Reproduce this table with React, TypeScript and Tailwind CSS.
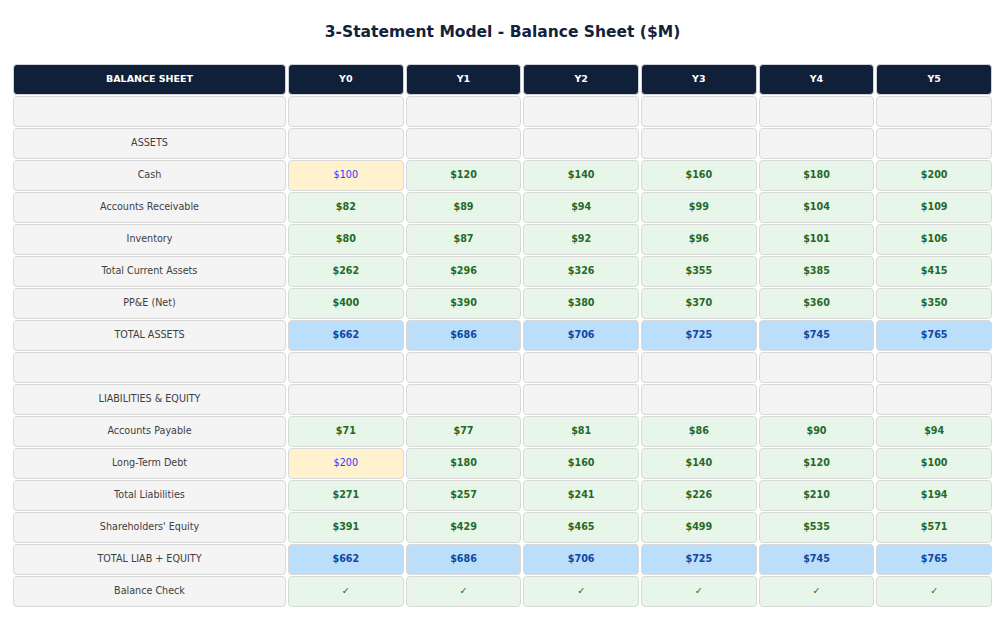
type Kind = "label" | "empty" | "input" | "calc" | "total" | "check";

type Row = { label: string; kind: "blank" | "section" | "input" | "calc" | "total" | "check"; values?: string[] };

const years = ["Y0", "Y1", "Y2", "Y3", "Y4", "Y5"];

const rows: Row[] = [
  { label: "", kind: "blank" },
  { label: "ASSETS", kind: "section" },
  { label: "Cash", kind: "input", values: ["$100", "$120", "$140", "$160", "$180", "$200"] },
  { label: "Accounts Receivable", kind: "calc", values: ["$82", "$89", "$94", "$99", "$104", "$109"] },
  { label: "Inventory", kind: "calc", values: ["$80", "$87", "$92", "$96", "$101", "$106"] },
  { label: "Total Current Assets", kind: "calc", values: ["$262", "$296", "$326", "$355", "$385", "$415"] },
  { label: "PP&E (Net)", kind: "calc", values: ["$400", "$390", "$380", "$370", "$360", "$350"] },
  { label: "TOTAL ASSETS", kind: "total", values: ["$662", "$686", "$706", "$725", "$745", "$765"] },
  { label: "", kind: "blank" },
  { label: "LIABILITIES & EQUITY", kind: "section" },
  { label: "Accounts Payable", kind: "calc", values: ["$71", "$77", "$81", "$86", "$90", "$94"] },
  { label: "Long-Term Debt", kind: "input", values: ["$200", "$180", "$160", "$140", "$120", "$100"] },
  { label: "Total Liabilities", kind: "calc", values: ["$271", "$257", "$241", "$226", "$210", "$194"] },
  { label: "Shareholders' Equity", kind: "calc", values: ["$391", "$429", "$465", "$499", "$535", "$571"] },
  { label: "TOTAL LIAB + EQUITY", kind: "total", values: ["$662", "$686", "$706", "$725", "$745", "$765"] },
  { label: "Balance Check", kind: "check", values: ["✓", "✓", "✓", "✓", "✓", "✓"] },
];

const cellStyles: Record<Kind, string> = {
  label: "bg-[#f4f4f4] text-[#404040]",
  empty: "bg-[#f4f4f4]",
  input: "bg-[#fff2cf] text-[#3434f5]",
  calc: "bg-[#e8f5e9] text-[#226a27] font-bold",
  total: "bg-[#bbdefb] text-[#0d47a1] font-bold",
  check: "bg-[#e8f5e9] text-[#226a27]",
};

function Cell({ kind, children }: { kind: Kind; children?: React.ReactNode }) {
  return (
    <div
      className={`h-[30.5px] flex items-center justify-center rounded-[4px] border-[1.5px] border-[#d9d9d9] text-[9.6px] ${cellStyles[kind]}`}
    >
      {children}
    </div>
  );
}

export default function App() {
  return (
    <div
      className="w-[1005px] h-[634px] bg-white"
      style={{ fontFamily: '"DejaVu Sans", Verdana, sans-serif' }}
    >
      <div className="h-[62px] pt-[3px] flex items-center justify-center">
        <h1 className="text-[15.5px] font-bold text-[#13223a]">3-Statement Model - Balance Sheet ($M)</h1>
      </div>

      <div className="mt-[2px] ml-[13px] w-[979px] grid grid-cols-[273px_repeat(6,1fr)] gap-x-[2px] gap-y-[1.5px]">
        {/* header */}
        <div className="h-[30.5px] flex items-center justify-center rounded-[4px] border border-[#cfd3d8] bg-[#102038] text-white font-bold text-[9.5px]">
          BALANCE SHEET
        </div>
        {years.map((y) => (
          <div
            key={y}
            className="h-[30.5px] flex items-center justify-center rounded-[4px] border border-[#cfd3d8] bg-[#102038] text-white font-bold text-[9.5px]"
          >
            {y}
          </div>
        ))}

        {rows.map((row, i) => (
          <div key={i} className="contents">
            <Cell kind="label">{row.label}</Cell>
            {years.map((y, j) => {
              if (!row.values) return <Cell key={y} kind="empty" />;
              let kind: Kind = row.kind as Kind;
              if (row.kind === "input" && j > 0) kind = "calc";
              return (
                <Cell key={y} kind={kind}>
                  {row.values[j]}
                </Cell>
              );
            })}
          </div>
        ))}
      </div>
    </div>
  );
}
